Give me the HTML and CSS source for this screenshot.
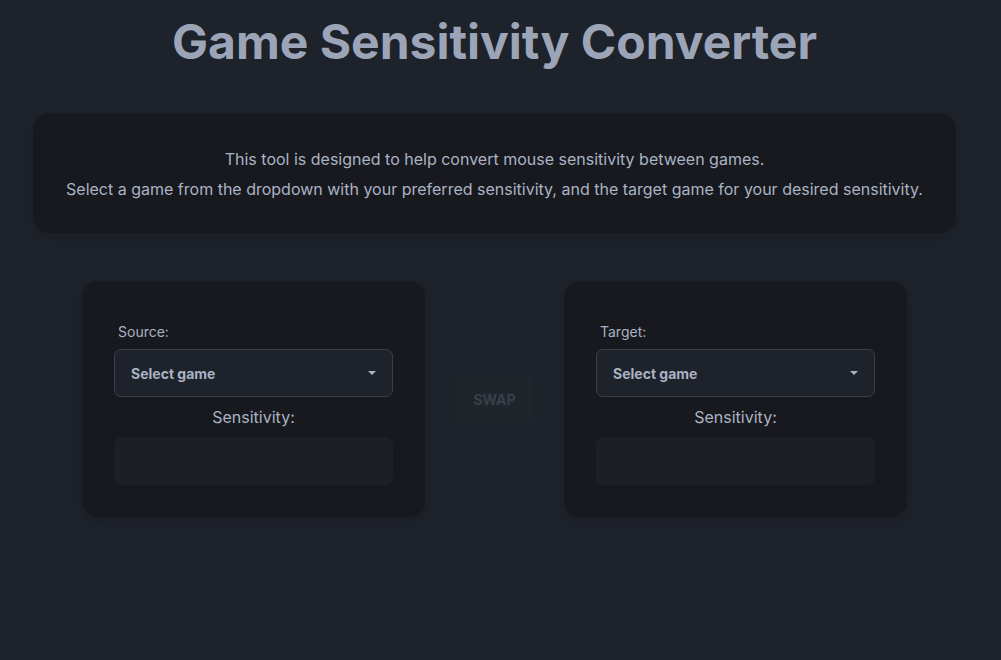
FILE: index.html
```html
<!DOCTYPE html>
<html lang="en">
<head>
<meta charset="utf-8">
<title>Game Sensitivity Converter</title>
<link rel="stylesheet" href="styles.css">
</head>
<body>
<main class="page">
  <h1 class="title">Game Sensitivity Converter</h1>
  <section class="info">
    <p>This tool is designed to help convert mouse sensitivity between games.</p>
    <p>Select a game from the dropdown with your preferred sensitivity, and the target game for your desired sensitivity.</p>
  </section>
  <section class="converter">
    <div class="panel">
      <label class="label">Source:</label>
      <div class="select"><span>Select game</span><span class="caret"></span></div>
      <div class="sens-label">Sensitivity:</div>
      <div class="sens-input"></div>
    </div>
    <button class="swap">SWAP</button>
    <div class="panel">
      <label class="label">Target:</label>
      <div class="select"><span>Select game</span><span class="caret"></span></div>
      <div class="sens-label">Sensitivity:</div>
      <div class="sens-input"></div>
    </div>
  </section>
</main>
</body>
</html>
```
FILE: styles.css
```css
* { box-sizing: border-box; }
html, body {
  margin: 0;
  padding: 0;
  background: #1e222a;
  height: 100%;
}
body {
  font-family: Inter, "Noto Sans", sans-serif;
  color: #a9b2c3;
}
.page {
  width: 989px;
  display: flex;
  flex-direction: column;
  align-items: center;
}
.title {
  margin: 11px 0 0;
  font-size: 48px;
  font-weight: 700;
  line-height: 62px;
  color: #9ca5b7;
  letter-spacing: 0;
}
.info {
  margin-top: 40px;
  width: 923px;
  height: 120px;
  background: #17191e;
  border-radius: 16px;
  box-shadow: 0 4px 12px rgba(0,0,0,0.15);
  display: flex;
  flex-direction: column;
  justify-content: center;
  align-items: center;
  gap: 6px;
  padding-top: 2px;
}
.info p {
  margin: 0;
  font-size: 16px;
  line-height: 24px;
  color: #aab3c4;
  text-align: center;
}
.converter {
  margin-top: 48px;
  display: flex;
  align-items: center;
  gap: 31px;
}
.panel {
  width: 343px;
  height: 236px;
  background: #17191e;
  border-radius: 16px;
  box-shadow: 0 4px 12px rgba(0,0,0,0.15);
  padding: 41px 32px 32px;
  display: flex;
  flex-direction: column;
}
.label {
  font-size: 14px;
  line-height: 20px;
  padding-left: 4px;
  color: #a9b2c3;
  margin-bottom: 7px;
}
.select {
  height: 48px;
  border: 1px solid #3b404b;
  border-radius: 7px;
  background: #1e222a;
  display: flex;
  align-items: center;
  justify-content: space-between;
  padding: 0 16px 0 16px;
  font-size: 14px;
  font-weight: 700;
  color: #a9b2c3;
}
.caret {
  width: 0;
  height: 0;
  border-left: 4px solid transparent;
  border-right: 4px solid transparent;
  border-top: 4px solid #a9b2c3;
}
.sens-label {
  margin-top: 8px;
  font-size: 16px;
  line-height: 24px;
  text-align: center;
  color: #aab3c4;
}
.sens-input {
  margin-top: 8px;
  height: 48px;
  border-radius: 7px;
  background: #1c1f25;
}
.swap {
  width: 77px;
  height: 48px;
  border: none;
  border-radius: 8px;
  background: #20242b;
  color: #3a3f49;
  font-family: Inter, "Noto Sans", sans-serif;
  font-size: 14px;
  font-weight: 700;
  padding: 0;
}
```
